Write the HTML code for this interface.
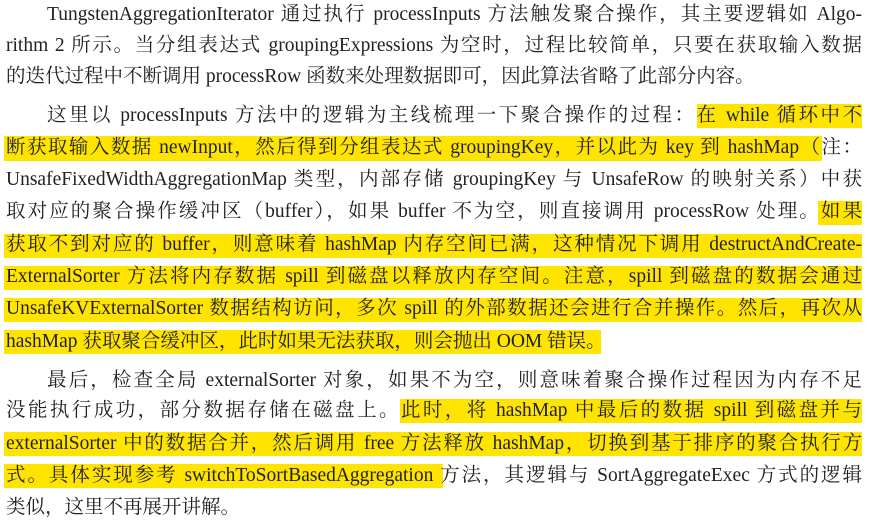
<!DOCTYPE html>
<html><head><meta charset="utf-8"><style>
body{margin:0;width:869px;height:524px;background:#fff;position:relative;overflow:hidden;
font-family:"Liberation Serif","Noto Serif CJK SC",serif;font-size:19.5px;color:#222;}
.l{position:absolute;left:6px;width:856px;height:28px;line-height:28px;text-align:justify;text-align-last:justify;white-space:nowrap;}
.e{text-align-last:left;text-align:left;}
.h{position:absolute;background:#ffe400;}
</style></head><body>
<div class="h" style="left:697px;top:104px;width:165px;height:24px"></div>
<div class="h" style="left:4px;top:136px;width:818px;height:25px"></div>
<div class="h" style="left:818px;top:201px;width:44px;height:24px"></div>
<div class="h" style="left:4px;top:234px;width:858px;height:24px"></div>
<div class="h" style="left:4px;top:266px;width:858px;height:24px"></div>
<div class="h" style="left:4px;top:298px;width:858px;height:24px"></div>
<div class="h" style="left:4px;top:330px;width:597px;height:24px"></div>
<div class="h" style="left:400px;top:399px;width:462px;height:24px"></div>
<div class="h" style="left:4px;top:432px;width:858px;height:24px"></div>
<div class="h" style="left:4px;top:464px;width:439px;height:24px"></div>

<div class="l" style="top:1px;left:47px;width:815px">TungstenAggregationIterator 通过执行 processInputs 方法触发聚合操作，其主要逻辑如 Algo-</div>
<div class="l" style="top:32px">rithm 2 所示。当分组表达式 groupingExpressions 为空时，过程比较简单，只要在获取输入数据</div>
<div class="l e" style="top:63px">的迭代过程中不断调用 processRow 函数来处理数据即可，因此算法省略了此部分内容。</div>
<div class="l" style="top:102px;left:47px;width:815px">这里以 processInputs 方法中的逻辑为主线梳理一下聚合操作的过程：在 while 循环中不</div>
<div class="l" style="top:134px">断获取输入数据 newInput，然后得到分组表达式 groupingKey，并以此为 key 到 hashMap（注：</div>
<div class="l" style="top:166px">UnsafeFixedWidthAggregationMap 类型，内部存储 groupingKey 与 UnsafeRow 的映射关系）中获</div>
<div class="l" style="top:198px">取对应的聚合操作缓冲区（buffer），如果 buffer 不为空，则直接调用 processRow 处理。如果</div>
<div class="l" style="top:231px">获取不到对应的 buffer，则意味着 hashMap 内存空间已满，这种情况下调用 destructAndCreate-</div>
<div class="l" style="top:263px">ExternalSorter 方法将内存数据 spill 到磁盘以释放内存空间。注意，spill 到磁盘的数据会通过</div>
<div class="l" style="top:295px">UnsafeKVExternalSorter 数据结构访问，多次 spill 的外部数据还会进行合并操作。然后，再次从</div>
<div class="l e" style="top:328px">hashMap 获取聚合缓冲区，此时如果无法获取，则会抛出 OOM 错误。</div>
<div class="l" style="top:367px;left:47px;width:815px">最后，检查全局 externalSorter 对象，如果不为空，则意味着聚合操作过程因为内存不足</div>
<div class="l" style="top:397px">没能执行成功，部分数据存储在磁盘上。此时，将 hashMap 中最后的数据 spill 到磁盘并与</div>
<div class="l" style="top:430px">externalSorter 中的数据合并，然后调用 free 方法释放 hashMap，切换到基于排序的聚合执行方</div>
<div class="l" style="top:462px">式。具体实现参考 switchToSortBasedAggregation 方法，其逻辑与 SortAggregateExec 方式的逻辑</div>
<div class="l e" style="top:494px">类似，这里不再展开讲解。</div>
</body></html>
